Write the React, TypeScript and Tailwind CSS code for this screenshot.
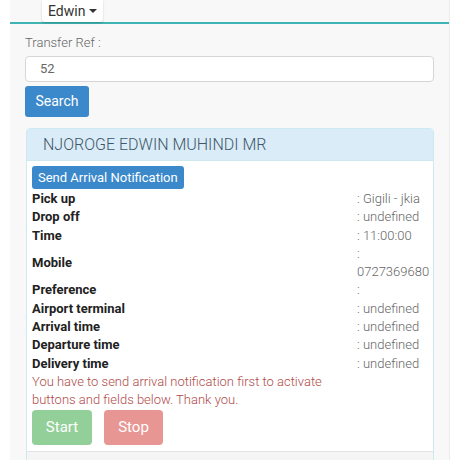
import React from 'react';

const rows: { label: string; value: string; tall?: boolean }[] = [
  { label: 'Pick up', value: ': Gigili - jkia' },
  { label: 'Drop off', value: ': undefined' },
  { label: 'Time', value: ': 11:00:00' },
  { label: 'Mobile', value: ': 0727369680', tall: true },
  { label: 'Preference', value: ':' },
  { label: 'Airport terminal', value: ': undefined' },
  { label: 'Arrival time', value: ': undefined' },
  { label: 'Departure time', value: ': undefined' },
  { label: 'Delivery time', value: ': undefined' },
];

const App = () => {
  return (
    <div className="w-[457px] h-[460px] overflow-hidden bg-white font-['Roboto',sans-serif]">
      <div className="ml-[10px] w-[440px] h-full bg-[#f8f8f8] border-r border-[#ececec]">
        <div className="h-[24px] border-b-2 border-[#3fb4b4] pl-[32px]">
          <button className="h-[22px] px-[6px] bg-white rounded-b-[3px] shadow-[0_1px_2px_rgba(0,0,0,0.2)] text-[14px] text-[#333] flex items-center gap-[4px]">
            Edwin
            <span className="inline-block w-0 h-0 border-l-[4px] border-r-[4px] border-t-[4px] border-l-transparent border-r-transparent border-t-[#333]" />
          </button>
        </div>

        <div className="px-[15px]">
          <div className="pt-[9px] h-[31px] text-[13px] text-[#666] font-light leading-[20px]">Transfer Ref :</div>
          <div className="mt-[1px] h-[26px] bg-white border border-[#d6d6d6] rounded-[4px] pl-[14px] text-[13px] text-[#666] leading-[24px]">52</div>
          <button className="mt-[4px] w-[64px] h-[31px] bg-[#3b88cb] rounded-[3px] text-white text-[14px]">Search</button>

          <div className="mt-[11px] ml-[1px] bg-white border border-[#cfe9f2] rounded-t-[4px] overflow-hidden">
            <div className="h-[32px] bg-[#d9ecf7] border-b border-[#cfe9f2] pl-[16px] text-[16px] font-light text-[#40576a] leading-[31px]">
              NJOROGE EDWIN MUHINDI MR
            </div>
            <div className="px-[5px] pt-[4px]">
              <button className="h-[23px] px-[6px] bg-[#3b88cb] rounded-[3px] text-white text-[13px] leading-[23px]">
                Send Arrival Notification
              </button>
              <div className="mt-[1px] grid grid-cols-[1fr_71px] text-[13px] leading-[18.3px]">
                {rows.map((r) => (
                  <React.Fragment key={r.label}>
                    <div className={`font-bold text-[#222] flex items-center ${r.tall ? 'h-[36.6px]' : ''}`}>{r.label}</div>
                    <div className="text-[#666] font-light">
                      {r.tall ? (
                        <>
                          :<br />
                          0727369680
                        </>
                      ) : (
                        r.value
                      )}
                    </div>
                  </React.Fragment>
                ))}
              </div>
              <p className="text-[13px] leading-[18.3px] text-[#b04a48] font-light">
                You have to send arrival notification first to activate
                <br />
                buttons and fields below. Thank you.
              </p>
              <div className="flex gap-[12px] pb-[6px]">
                <button className="w-[60px] h-[35px] bg-[#92cf99] rounded-[4px] text-white text-[15px]">Start</button>
                <button className="w-[59px] h-[35px] bg-[#e89694] rounded-[4px] text-white text-[15px]">Stop</button>
              </div>
            </div>
            <div className="h-[20px] bg-[#f5f5f5] border-t border-[#e4e4e4]" />
          </div>
        </div>
      </div>
    </div>
  );
};

export default App;
